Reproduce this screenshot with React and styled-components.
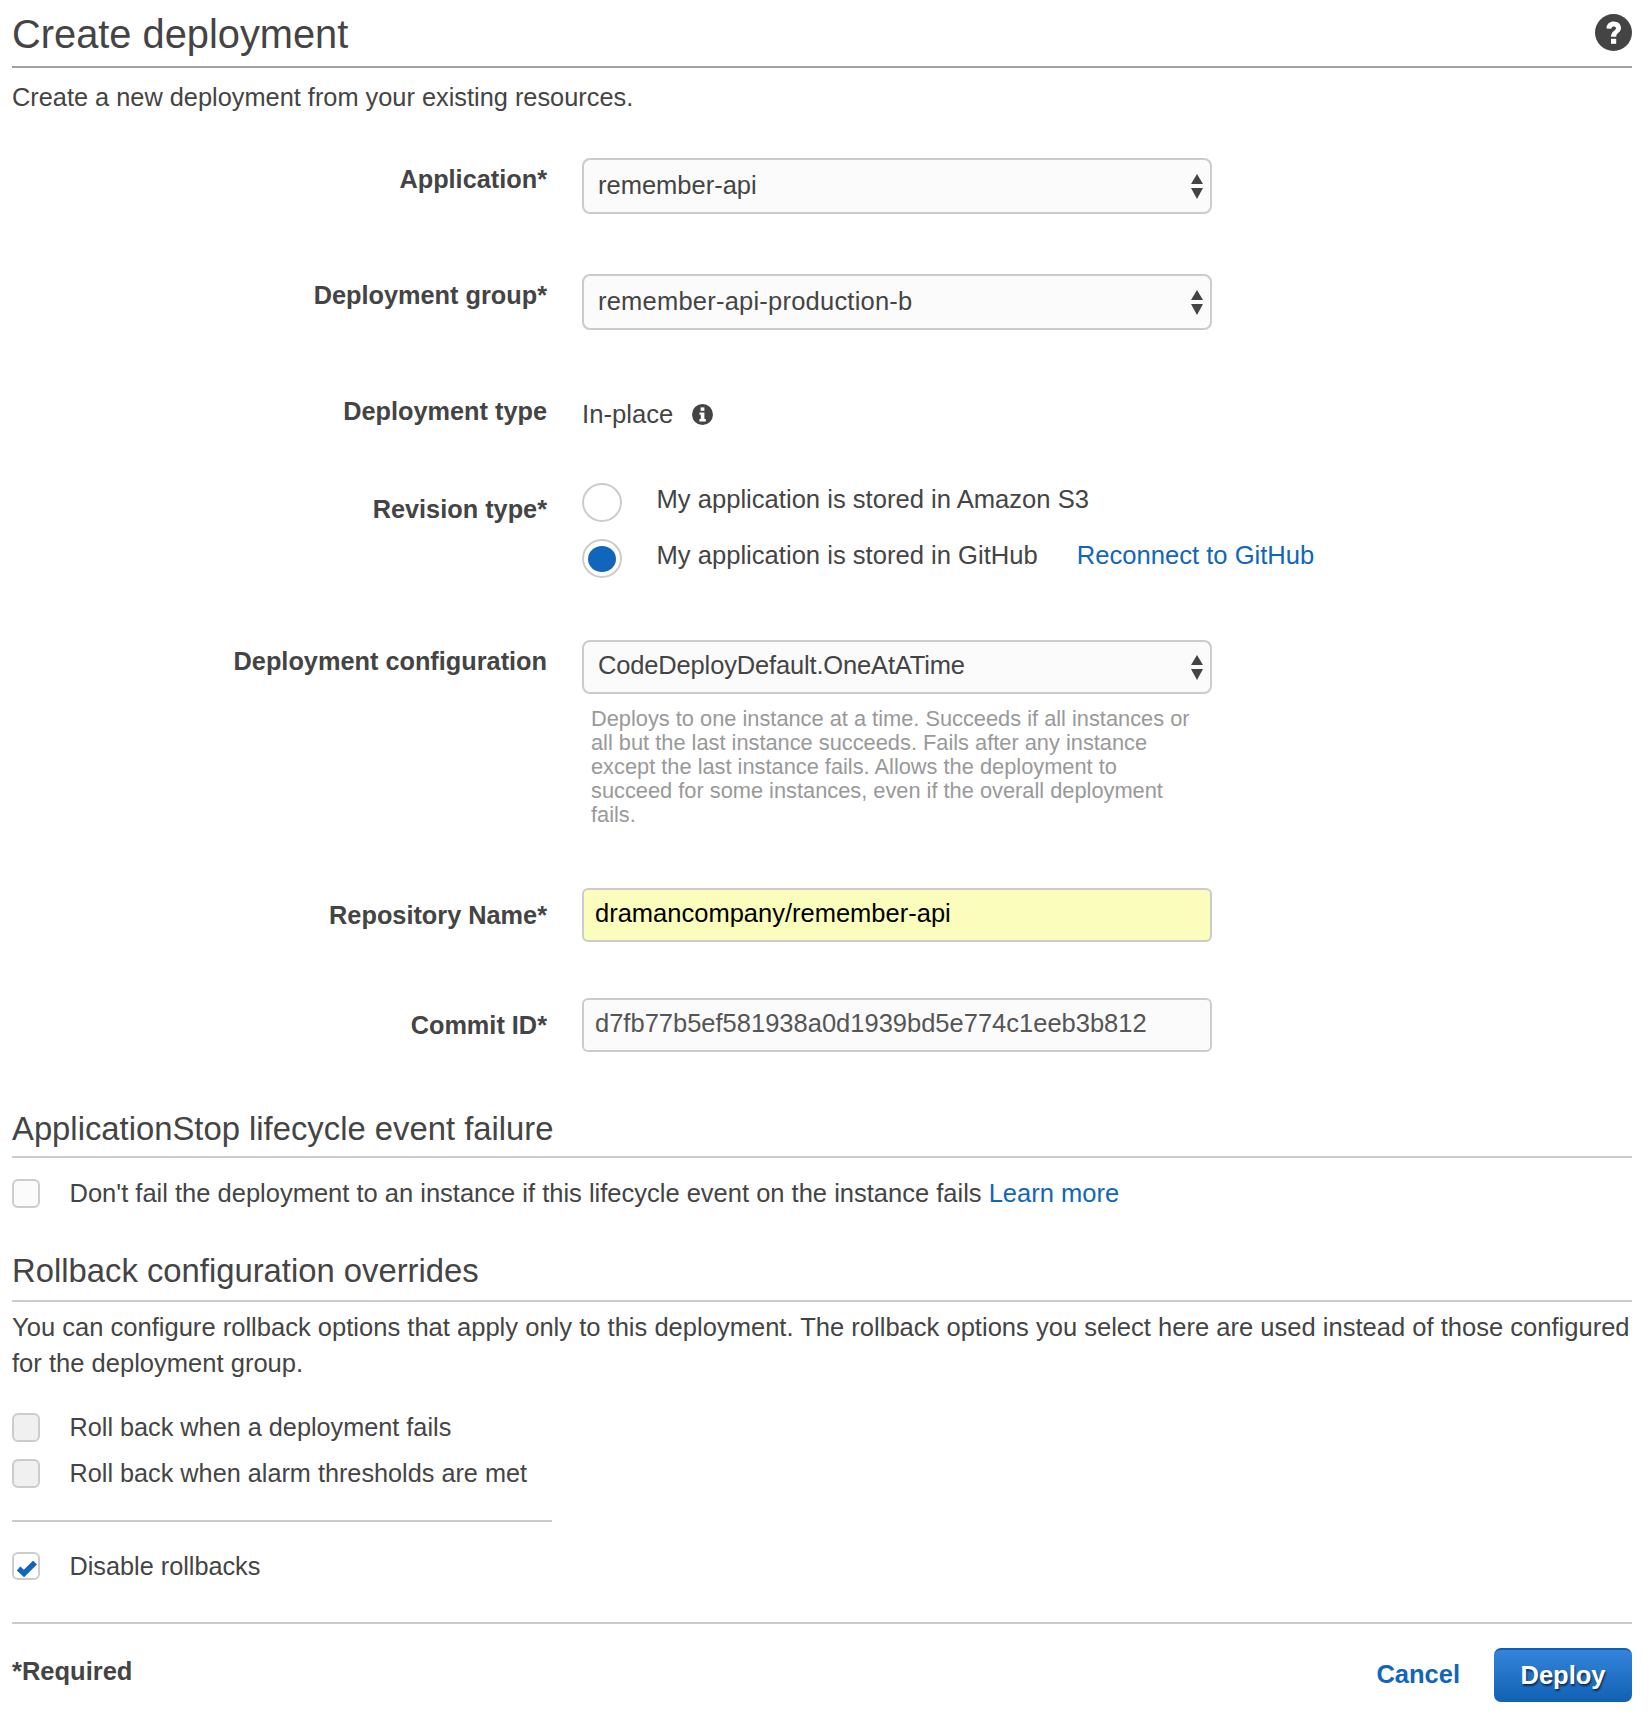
import React from 'react';
import styled, { createGlobalStyle } from 'styled-components';

const GlobalStyle = createGlobalStyle`
    html, body {
        margin: 0;
        padding: 0;
        background: #ffffff;
    }
    * {
        box-sizing: border-box;
    }
`;

const Page = styled.div`
    width: 1652px;
    height: 1718px;
    overflow: hidden;
    padding: 0 20px 0 12px;
    font-family: "Liberation Sans", Arial, sans-serif;
    font-size: 25.5px;
    color: #444444;
    background: #ffffff;
`;

const TitleBar = styled.header`
    display: flex;
    justify-content: space-between;
    align-items: center;
    height: 68px;
    padding-bottom: 2px;
    border-bottom: 2px solid #a0a0a0;
`;

const Title = styled.h1`
    margin: 4px 0 0;
    font-size: 39.8px;
    font-weight: normal;
    line-height: 62px;
`;

const Intro = styled.p`
    margin: 0 0 41px;
    height: 49px;
    font-size: 25.35px;
    line-height: 58px;
`;

const Row = styled.div`
    display: grid;
    grid-template-columns: 534px 630px;
    column-gap: 36px;
    margin-bottom: ${(p) => p.$after || 0}px;
`;

const Label = styled.label`
    margin-right: -1px;
    font-size: 25.3px;
    font-weight: bold;
    text-align: right;
    line-height: 36px;
    padding-top: ${(p) => p.$top || 0}px;
`;

const SelectBox = styled.div`
    display: flex;
    justify-content: space-between;
    align-items: center;
    height: ${(p) => p.$height || 56}px;
    padding: 0 6px 0 14px;
    border: 2px solid #cccccc;
    border-radius: 8px;
    background: #fbfbfb;
    color: #444444;
`;

const SelectValue = styled.span`
    margin-bottom: ${(p) => p.$lift || 2}px;
    letter-spacing: ${(p) => p.$tracking || 0}px;
`;

const TextField = styled.input`
    display: block;
    width: 100%;
    height: 54px;
    padding: 0 11px 4px;
    border: 2px solid #cccccc;
    border-radius: 6px;
    outline: none;
    font-family: inherit;
    font-size: 25.5px;
    background: ${(p) => (p.$filled ? '#fafdbb' : '#fbfbfb')};
    color: ${(p) => (p.$filled ? '#000000' : '#555555')};
`;

const PlainValue = styled.div`
    display: flex;
    align-items: center;
    gap: 19px;
    height: 36px;
    margin-top: 4px;
    font-size: 25.7px;
`;

const RadioStack = styled.div`
    display: flex;
    flex-direction: column;
    gap: 17px;
`;

const RadioRow = styled.div`
    display: flex;
    align-items: flex-start;
    white-space: nowrap;
`;

const RadioMark = styled.span`
    flex: none;
    display: flex;
    align-items: center;
    justify-content: center;
    width: 40px;
    height: 39px;
    margin-right: 34.5px;
    border: 2px solid #cccccc;
    border-radius: 50%;
    background: #ffffff;

    &::after {
        content: '';
        display: ${(p) => (p.$on ? 'block' : 'none')};
        width: 28px;
        height: 26px;
        border-radius: 50%;
        background: #1166bb;
    }
`;

const RadioText = styled.span`
    font-size: 25.6px;
    line-height: 36px;
    margin-top: -2px;
`;

const TextLink = styled.a`
    color: #1166bb;
    text-decoration: none;
    margin-left: ${(p) => p.$left || 0}px;
`;

const HelpText = styled.p`
    margin: 0;
    padding: 13px 20px 0 9px;
    font-size: 21.8px;
    line-height: 24px;
    color: #999999;
`;

const Section = styled.h2`
    margin: ${(p) => p.$top || 0}px 0 0;
    height: ${(p) => p.$height || 53}px;
    font-size: 32.8px;
    font-weight: normal;
    line-height: 48px;
    border-bottom: 2px solid #cccccc;
`;

const CheckRow = styled.div`
    display: flex;
    align-items: center;
    height: 30px;
    margin-top: ${(p) => p.$top || 0}px;
    font-size: ${(p) => p.$size || 25.25}px;
    white-space: nowrap;
`;

const CheckMark = styled.span`
    flex: none;
    display: flex;
    align-items: center;
    justify-content: center;
    width: 28px;
    height: ${(p) => (p.$on ? 28 : 29)}px;
    margin-right: 29.5px;
    border: 2px solid #cccccc;
    border-radius: 6px;
    background: ${(p) => (p.$on ? '#ffffff' : p.$muted ? '#f0f0f0' : '#fbfbfb')};
`;

const Paragraph = styled.p`
    margin: 7px 0 0;
    font-size: 25.55px;
    line-height: 36px;
`;

const Divider = styled.hr`
    width: ${(p) => p.$width || '100%'};
    height: 2px;
    margin: ${(p) => p.$top || 0}px 0 0;
    border: 0;
    background: #cccccc;
`;

const Footer = styled.footer`
    display: flex;
    justify-content: space-between;
    align-items: center;
    height: 54px;
    margin-top: 24px;
`;

const Required = styled.strong`
    font-weight: bold;
    margin-top: -7px;
`;

const Actions = styled.div`
    display: flex;
    align-items: center;
    gap: 34px;
`;

const CancelLink = styled.a`
    margin-top: -1px;
    font-weight: bold;
    color: #1166bb;
    text-decoration: none;
`;

const DeployButton = styled.button`
    width: 138px;
    height: 54px;
    padding: 0 0 2px;
    border: 0;
    border-top: 2px solid #0f5fb0;
    border-radius: 7px;
    background: linear-gradient(#3484dc, #1161b3);
    font-family: inherit;
    font-size: 25.5px;
    font-weight: bold;
    color: #ffffff;
    text-shadow: 1px 2px 2px rgba(0, 0, 0, 0.6);
`;

const CheckGlyph = styled.svg`
    margin-top: 5px;
    margin-left: 1px;
`;

const Arrows = () => (
    <svg width="14" height="25" viewBox="0 0 14 25" fill="#444444">
        <path d="M7 0 L13 10 L1 10 Z" />
        <path d="M1 14 L13 14 L7 25 Z" />
    </svg>
);

const HelpIcon = () => (
    <svg width="37" height="37" viewBox="0 0 37 37">
        <circle cx="18.5" cy="18.5" r="18.5" fill="#444444" />
        <path
            d="M11.5 14.5 C11.5 10 15 7.5 18.7 7.5 C23 7.5 26 10.3 26 14 C26 18.5 21.2 18.7 21.2 22.8 L16 22.8 C16 17 21 16.5 21 14.2 C21 13 20 12.4 18.7 12.4 C17.3 12.4 16.4 13.3 16.3 14.8 Z"
            fill="#ffffff"
        />
        <rect x="16" y="24.8" width="5.2" height="5" fill="#ffffff" />
    </svg>
);

const InfoIcon = () => (
    <svg width="21" height="21" viewBox="0 0 21 21">
        <circle cx="10.5" cy="10.5" r="10.5" fill="#444444" />
        <rect x="8.6" y="3.4" width="3.8" height="3.4" fill="#ffffff" />
        <path d="M7.5 8.5 H12.4 V15 H13.8 V17.4 H7.4 V15 H8.8 V10.8 H7.5 Z" fill="#ffffff" />
    </svg>
);

const CheckIcon = () => (
    <CheckGlyph width="20" height="16" viewBox="0 0 20 16">
        <path d="M1.5 7.5 L7 12.5 L18 1.5" fill="none" stroke="#1166bb" strokeWidth="5.4" />
    </CheckGlyph>
);

class App extends React.Component {
    render() {
        return (
            <Page>
                <GlobalStyle />
                <TitleBar>
                    <Title>Create deployment</Title>
                    <HelpIcon />
                </TitleBar>
                <Intro>Create a new deployment from your existing resources.</Intro>

                <Row $after={60}>
                    <Label $top={3}>Application*</Label>
                    <SelectBox>
                        <SelectValue>remember-api</SelectValue>
                        <Arrows />
                    </SelectBox>
                </Row>

                <Row $after={62}>
                    <Label $top={3}>Deployment group*</Label>
                    <SelectBox>
                        <SelectValue $tracking={0.22}>remember-api-production-b</SelectValue>
                        <Arrows />
                    </SelectBox>
                </Row>

                <Row $after={51}>
                    <Label $top={1}>Deployment type</Label>
                    <PlainValue>
                        In-place
                        <InfoIcon />
                    </PlainValue>
                </Row>

                <Row $after={62}>
                    <Label $top={8}>Revision type*</Label>
                    <RadioStack>
                        <RadioRow>
                            <RadioMark />
                            <RadioText>My application is stored in Amazon S3</RadioText>
                        </RadioRow>
                        <RadioRow>
                            <RadioMark $on />
                            <RadioText>
                                My application is stored in GitHub
                                <TextLink href="#" $left={39}>
                                    Reconnect to GitHub
                                </TextLink>
                            </RadioText>
                        </RadioRow>
                    </RadioStack>
                </Row>

                <Row $after={61}>
                    <Label $top={3}>Deployment configuration</Label>
                    <div>
                        <SelectBox $height={54}>
                            <SelectValue $lift={3} $tracking={-0.16}>
                                CodeDeployDefault.OneAtATime
                            </SelectValue>
                            <Arrows />
                        </SelectBox>
                        <HelpText>
                            Deploys to one instance at a time. Succeeds if all instances or all but the last
                            instance succeeds. Fails after any instance except the last instance fails. Allows
                            the deployment to succeed for some instances, even if the overall deployment fails.
                        </HelpText>
                    </div>
                </Row>

                <Row $after={56}>
                    <Label $top={9}>Repository Name*</Label>
                    <TextField $filled readOnly value="dramancompany/remember-api" />
                </Row>

                <Row $after={53}>
                    <Label $top={9}>Commit ID*</Label>
                    <TextField readOnly value="d7fb77b5ef581938a0d1939bd5e774c1eeb3b812" />
                </Row>

                <Section>ApplicationStop lifecycle event failure</Section>
                <CheckRow $top={20} $size={25.5}>
                    <CheckMark />
                    <span>
                        Don't fail the deployment to an instance if this lifecycle event on the instance fails{' '}
                        <TextLink href="#">Learn more</TextLink>
                    </span>
                </CheckRow>

                <Section $top={39} $height={55}>
                    Rollback configuration overrides
                </Section>
                <Paragraph>
                    You can configure rollback options that apply only to this deployment. The rollback options
                    you select here are used instead of those configured for the deployment group.
                </Paragraph>

                <CheckRow $top={31}>
                    <CheckMark $muted />
                    Roll back when a deployment fails
                </CheckRow>
                <CheckRow $top={16}>
                    <CheckMark $muted />
                    Roll back when alarm thresholds are met
                </CheckRow>
                <Divider $width="540px" $top={32} />
                <CheckRow $top={29}>
                    <CheckMark $on>
                        <CheckIcon />
                    </CheckMark>
                    Disable rollbacks
                </CheckRow>
                <Divider $top={41} />

                <Footer>
                    <Required>*Required</Required>
                    <Actions>
                        <CancelLink href="#">Cancel</CancelLink>
                        <DeployButton>Deploy</DeployButton>
                    </Actions>
                </Footer>
            </Page>
        );
    }
}

export default App;
